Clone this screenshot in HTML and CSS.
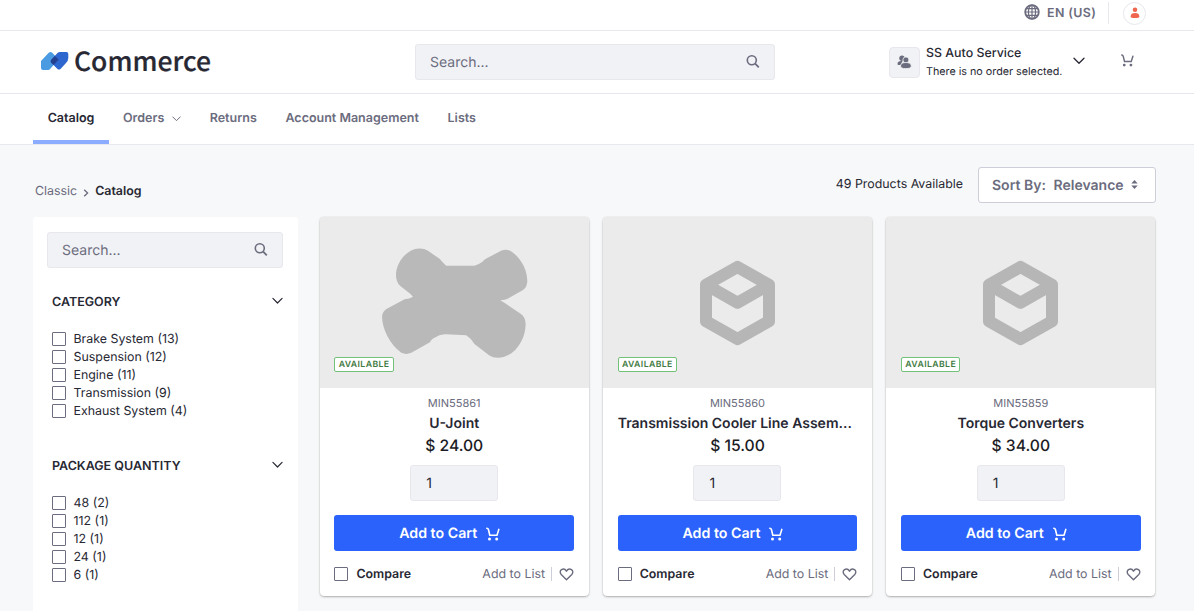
FILE: index.html
```html
<!DOCTYPE html>
<html lang="en">
<head>
<meta charset="utf-8">
<title>Commerce Catalog</title>
<link rel="stylesheet" href="styles.css">
</head>
<body>
<svg class="defs" width="0" height="0">
  <symbol id="search" viewBox="0 0 14 14"><circle cx="5.8" cy="5.3" r="4.5" fill="none" stroke="currentColor" stroke-width="1.6"/><path d="M9.2 8.7l3.6 3.6" fill="none" stroke="currentColor" stroke-width="1.8"/></symbol>
  <symbol id="chevron" viewBox="0 0 12 8"><path d="M1 1.2l5 5 5-5" fill="none" stroke="currentColor" stroke-width="1.3" stroke-linecap="round" stroke-linejoin="round"/></symbol>
  <symbol id="cart" viewBox="0 0 14 14"><path d="M.8 1.2C2 1.2 2.2 1.6 2.5 2.8L3.8 8.2H11L12.8 2.4" fill="none" stroke="currentColor" stroke-width="1.6" stroke-linecap="round" stroke-linejoin="round"/><circle cx="3.5" cy="11.9" r="1.5" fill="currentColor"/><circle cx="10.7" cy="11.9" r="1.5" fill="currentColor"/></symbol>
  <symbol id="heart" viewBox="0 0 16 14"><path d="M8 12.6L2.3 6.9C.6 5.1 1 2.7 2.7 1.7 4.5.7 6.7 1.3 8 3.4 9.3 1.3 11.5.7 13.3 1.7 15 2.7 15.4 5.1 13.7 6.9Z" fill="none" stroke="currentColor" stroke-width="1.5" stroke-linejoin="round"/></symbol>
  <symbol id="box" viewBox="315 150 225 257"><path d="M427.5 170.3L522 224V333L427.5 386.7L333 333V224ZM333 224L427.5 277.7L522 224" fill="none" stroke="#b6b6b6" stroke-width="36" stroke-linejoin="round"/></symbol>
</svg>

<div class="topbar">
  <svg class="globe" width="16" height="16" viewBox="0 0 16 16"><g fill="none" stroke="currentColor" stroke-width="1.2"><circle cx="8" cy="8" r="6.800" stroke-width="1.800"/><ellipse cx="8" cy="8" rx="3.6" ry="7"/><path d="M8 1v14M1 8h14M2.2 4.7h11.6M2.2 11.3h11.6"/></g></svg>
  <span class="lang">EN (US)</span>
  <span class="rule"></span>
  <span class="avatar"><svg width="10" height="12" viewBox="0 0 10 12"><circle cx="5" cy="2.8" r="2.3"/><path d="M.7 9.2C.7 7 2.3 5.9 5 5.9S9.3 7 9.3 9.2C9.3 10.7 8 11.1 5 11.1S.7 10.7.7 9.2Z"/></svg></span>
</div>

<header class="header">
  <a class="brand">
    <svg width="29" height="20" viewBox="0 0 29 20"><path d="M1 10L9 1.500Q10.500.4 12 1.400L18.500 8.500 10.500 17.500Q9.500 19 8 19H3Q1 18.800 1 17Z" fill="#4b9be3"/><path d="M11 9L17.500 2Q18.500 1 20 1H26.500Q28.300 1 28.300 3V7Q28.300 9.500 26 12L20.500 18Q19 19 17.500 18L11 11.500Q10.500 10 11 9Z" fill="#2e66d0"/><path d="M14.900 5.100L18.600 8.500 13.600 14 11 11.500Q10.300 10 11 9Z" fill="#23418f"/></svg>
    <span class="brand-name">Commerce</span>
  </a>
  <div class="field header-search"><span>Search...</span><svg width="14" height="14"><use href="#search"/></svg></div>
  <div class="account">
    <span class="account-icon"><svg width="15" height="14" viewBox="0 0 15 14"><circle cx="5" cy="3.300" r="2.700"/><path d="M.5 9C.5 6.700 2.500 5.800 5.500 6.200L3.500 10H1.500Q.5 10 .5 9Z"/><g stroke="#f1f2f5" stroke-width=".8"><circle cx="8.900" cy="4.900" r="3"/><path d="M3.500 11C3.500 8.500 5.800 7.500 8.800 7.500S14.300 8.500 14.300 11C14.300 13 12 13.600 8.800 13.600S3.500 13 3.500 11Z"/></g></svg></span>
    <span class="account-text"><b>SS Auto Service</b><small>There is no order selected.</small></span>
    <svg class="account-chevron" width="12" height="8"><use href="#chevron"/></svg>
    <svg class="header-cart" width="13" height="13"><use href="#cart"/></svg>
  </div>
</header>

<nav class="nav">
  <a class="active">Catalog</a>
  <a class="orders">Orders <svg width="9" height="6"><use href="#chevron"/></svg></a>
  <a>Returns</a>
  <a>Account Management</a>
  <a>Lists</a>
</nav>

<main class="page">
  <div class="toolbar">
    <div class="crumbs"><span>Classic</span><svg width="6" height="8" viewBox="0 0 6 8"><path d="M1.200.7L4.600 4 1.200 7.300" fill="none" stroke="currentColor" stroke-width="1.300"/></svg><b>Catalog</b></div>
    <span class="count">49 Products Available</span>
    <div class="sort"><span>Sort By:</span><span>Relevance</span><svg width="7" height="9" viewBox="0 0 7 9"><path d="M3.500 0L6.700 3.500H.3ZM3.500 9L.3 5.500H6.700Z" fill="currentColor"/></svg></div>
  </div>

  <div class="columns">
    <aside class="sidebar">
      <div class="field"><span>Search...</span><svg width="14" height="14"><use href="#search"/></svg></div>
      <section class="facet">
        <h2>CATEGORY <svg width="11" height="8"><use href="#chevron"/></svg></h2>
        <label><i class="check"></i>Brake System (13)</label>
        <label><i class="check"></i>Suspension (12)</label>
        <label><i class="check"></i>Engine (11)</label>
        <label><i class="check"></i>Transmission (9)</label>
        <label><i class="check"></i>Exhaust System (4)</label>
      </section>
      <section class="facet">
        <h2>PACKAGE QUANTITY <svg width="11" height="8"><use href="#chevron"/></svg></h2>
        <label><i class="check"></i>48 (2)</label>
        <label><i class="check"></i>112 (1)</label>
        <label><i class="check"></i>12 (1)</label>
        <label><i class="check"></i>24 (1)</label>
        <label><i class="check"></i>6 (1)</label>
      </section>
    </aside>

    <div class="products">
      <article class="card">
        <div class="media">
          <svg width="150" height="113" viewBox="208.500 107.500 450 340"><path fill="#b9b9b9" d="M259 195C259 155 295 114 330 115Q345 115 355 122L390 146Q400 158 410 167L495 167Q510 162 518 156Q525 147 535 143L575 122Q590 115 605 123C635 143 655 180 654 215Q653 232 640 241L595 266Q588 270 573 271L585 278L635 312Q648 322 649 340C650 390 615 443 565 444Q550 444 540 437L495 402Q485 385 470 376L410 373Q390 373 380 381Q365 387 361 397L305 429Q290 436 275 429C240 405 217 355 217 320Q218 305 230 297L285 268Q300 266 310 260Q305 253 295 246L272 228Q259 217 259 195Z"/></svg>
          <span class="badge">AVAILABLE</span>
        </div>
        <div class="info">
          <div class="sku">MIN55861</div>
          <div class="name">U-Joint</div>
          <div class="price">$ 24.00</div>
          <div class="qty">1</div>
          <div class="buy">Add to Cart <svg width="14" height="14"><use href="#cart"/></svg></div>
          <div class="actions"><i class="check"></i><b>Compare</b><span class="list">Add to List</span><svg width="15" height="13"><use href="#heart"/></svg></div>
        </div>
      </article>
      <article class="card">
        <div class="media">
          <svg width="75" height="86"><use href="#box"/></svg>
          <span class="badge">AVAILABLE</span>
        </div>
        <div class="info">
          <div class="sku">MIN55860</div>
          <div class="name long">Transmission Cooler Line Assem...</div>
          <div class="price">$ 15.00</div>
          <div class="qty">1</div>
          <div class="buy">Add to Cart <svg width="14" height="14"><use href="#cart"/></svg></div>
          <div class="actions"><i class="check"></i><b>Compare</b><span class="list">Add to List</span><svg width="15" height="13"><use href="#heart"/></svg></div>
        </div>
      </article>
      <article class="card">
        <div class="media">
          <svg width="75" height="86"><use href="#box"/></svg>
          <span class="badge">AVAILABLE</span>
        </div>
        <div class="info">
          <div class="sku">MIN55859</div>
          <div class="name">Torque Converters</div>
          <div class="price">$ 34.00</div>
          <div class="qty">1</div>
          <div class="buy">Add to Cart <svg width="14" height="14"><use href="#cart"/></svg></div>
          <div class="actions"><i class="check"></i><b>Compare</b><span class="list">Add to List</span><svg width="15" height="13"><use href="#heart"/></svg></div>
        </div>
      </article>
    </div>
  </div>
</main>
</body>
</html>
```

FILE: styles.css
```css
* { box-sizing: border-box; }
html, body { height: 611px; overflow: hidden; }
body {
  margin: 0;
  background: #f7f8f9;
  color: #272833;
  font: 12.400px/18px Inter, "Liberation Sans", sans-serif;
  text-rendering: geometricPrecision;
}
svg { display: block; flex: none; }
.defs { position: absolute; }

.topbar {
  height: 31px;
  padding: 0 48px 4px 0;
  background: #fff;
  border-bottom: 1px solid #e7e7ed;
  display: flex;
  align-items: center;
  justify-content: flex-end;
  color: #6b6c7e;
}
.globe { margin-bottom: 2px; }
.lang { width: 48px; margin-left: 7px; font-weight: 600; letter-spacing: .4px; white-space: nowrap; }
.rule { width: 1px; height: 22px; margin: 0 14px 0 13px; background: #e7e7ed; }
.avatar {
  width: 23px;
  height: 23px;
  border: 1px solid #e7e7ed;
  border-radius: 50%;
  display: flex;
  align-items: center;
  justify-content: center;
}
.avatar svg { fill: #f0654f; }

.header {
  height: 63px;
  padding: 0 60px 0 40px;
  background: #fff;
  border-bottom: 1px solid #e7e7ed;
  display: flex;
  align-items: center;
}
.brand { width: 375px; padding-bottom: 5px; display: flex; align-items: flex-start; }
.brand svg { margin-top: 7px; }
.brand-name {
  margin-left: 5px;
  font: 500 26.500px/32px "Noto Sans CJK JP", "Noto Sans", sans-serif;
  -webkit-text-stroke: .2px currentColor;
}
.field {
  height: 36px;
  padding: 0 14px;
  background: #f1f2f5;
  border: 1px solid #e7e7ed;
  border-radius: 3px;
  color: #6b6c7e;
  font-size: 14px;
  display: flex;
  align-items: center;
  justify-content: space-between;
}
.field span { padding-top: 2px; }
.header-search { width: 360px; }
.account { margin-left: auto; display: flex; align-items: center; }
.account-icon {
  width: 31px;
  height: 31px;
  background: #f1f2f5;
  border: 1px solid #e7e7ed;
  border-radius: 4px;
  display: flex;
  align-items: center;
  justify-content: center;
}
.account-icon svg { fill: #6b6c7e; }
.account-text { width: 141px; margin-left: 6px; white-space: nowrap; }
.account-text b { display: block; font-weight: 500; line-height: 18px; }
.account-text small { display: block; padding-top: 1px; font-size: 10.750px; line-height: 18px; }
.account-chevron { margin: 0 36px 3px 6px; }
.header-cart { margin-bottom: 3px; color: #6b6c7e; }

.nav {
  height: 51px;
  padding-left: 33px;
  background: #fff;
  border-bottom: 1px solid #e7e7ed;
  display: flex;
  color: #6b6c7e;
  font-size: 12.500px;
  font-weight: 600;
}
.nav a { margin-right: 28.700px; height: 50px; padding-top: 16px; white-space: nowrap; }
.nav a.active {
  width: 76px;
  margin-right: 14px;
  text-align: center;
  color: #272833;
  border-bottom: 4px solid #8cadff;
}
.nav a.orders { display: flex; align-items: baseline; gap: 7.700px; }

.page { padding: 22px 38px 0 33px; }
.toolbar { height: 50px; display: flex; align-items: flex-start; }
.crumbs { padding: 15px 0 0 2px; display: flex; align-items: center; color: #6b6c7e; }
.crumbs svg { margin: 3px 6px 0 6px; }
.crumbs b { color: #272833; font-weight: 600; }
.count { margin: 8px 15px 0 auto; }
.sort {
  width: 178px;
  height: 36px;
  padding-left: 13px;
  background: #fff;
  border: 1px solid #cdced9;
  border-radius: 3px;
  display: flex;
  align-items: center;
  gap: 7.700px;
  color: #6b6c7e;
  font-size: 14px;
  font-weight: 600;
  white-space: nowrap;
}
.sort span { padding-top: 2px; }
.sort svg { margin-bottom: 2px; }

.columns { display: flex; gap: 21.500px; }
.sidebar {
  width: 265px;
  height: 420px;
  padding: 15px 15px 0 14px;
  background: #fff;
  border-radius: 3px;
}
.facet { padding: 25px 0 13px 5px; }
.facet h2 {
  margin: 0 0 16px;
  font-size: 12.500px;
  line-height: 19px;
  font-weight: 600;
  display: flex;
  align-items: center;
  justify-content: space-between;
}
.facet h2 svg { margin-bottom: 4px; }
.facet label { height: 18px; padding-top: 3px; display: flex; align-items: center; }
.facet label:last-child { margin-bottom: 1px; }
.check { width: 14px; height: 14px; flex: none; border: 1px solid #6b6c7e; border-radius: 1px; background: #fff; }
.facet .check { margin: 1px 7.500px 0 0; }

.products { display: grid; grid-template-columns: repeat(3, 269.300px); gap: 14px; }
.card {
  height: 379px;
  background: #fff;
  border-radius: 4px;
  box-shadow: 0 1px 3px -1px rgba(0, 0, 0, .6), 0 0 1px rgba(0, 0, 0, .2);
  overflow: hidden;
}
.media {
  position: relative;
  height: 171px;
  background: #ebebeb;
  display: flex;
  align-items: center;
  justify-content: center;
}
.badge {
  position: absolute;
  left: 14.900px;
  bottom: 16px;
  width: 59.400px;
  height: 15px;
  background: #fff;
  border: 1px solid #72c278;
  border-radius: 2px;
  color: #3f7b43;
  font-size: 8.700px;
  line-height: 15px;
  font-weight: 600;
  letter-spacing: .4px;
  text-align: center;
}
.info { padding: 6px 14.800px 0 14.900px; text-align: center; display: flex; flex-direction: column; align-items: stretch; }
.sku { height: 19px; color: #6b6c7e; font-size: 11px; }
.name { height: 21px; font-size: 14px; line-height: 21px; font-weight: 600; white-space: nowrap; }
.name.long { text-align: left; }
.price { height: 24px; font-size: 15.700px; line-height: 23px; font-weight: 500; color: #1c1c24; }
.qty {
  width: 88px;
  height: 36px;
  margin: 7px auto 14px;
  padding-left: 15px;
  background: #f1f2f5;
  border: 1px solid #e7e7ed;
  border-radius: 3px;
  font-size: 14px;
  line-height: 36px;
  text-align: left;
}
.buy {
  height: 36px;
  padding: 1px 17px 0 8px;
  background: #2b62fb;
  border-radius: 3px;
  color: #fff;
  font-size: 14.200px;
  font-weight: 600;
  display: flex;
  align-items: center;
  justify-content: center;
  gap: 9px;
}
.actions { margin-top: 14px; display: flex; align-items: center; }
.actions b { margin-left: 8px; font-weight: 600; }
.actions .list { margin-left: auto; color: #6b6c7e; }
.actions svg { color: #6b6c7e; }
.actions .list::after {
  content: "";
  display: inline-block;
  width: 1px;
  height: 14px;
  margin: 0 7px 0 6px;
  background: #cdced9;
  vertical-align: -3px;
}
```
